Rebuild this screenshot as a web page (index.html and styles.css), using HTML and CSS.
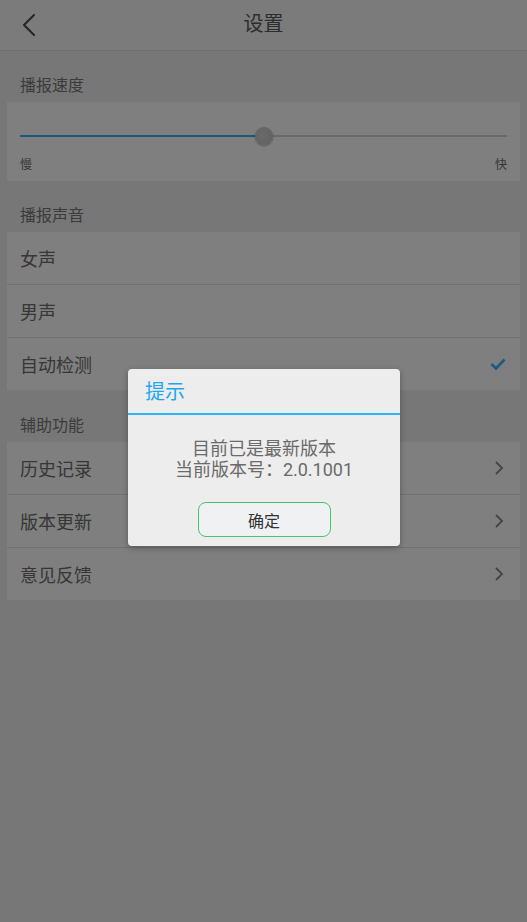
FILE: index.html
```html
<!DOCTYPE html>
<html lang="zh-CN">
<head>
<meta charset="utf-8">
<title>设置</title>
<link rel="stylesheet" href="styles.css">
</head>
<body>
<div class="app">
  <header class="topbar">
    <span class="back">
      <svg width="14" height="22" viewBox="0 0 14 22"><path d="M12 1 L2 11 L12 21" fill="none" stroke="#4a4a4a" stroke-width="2" stroke-linecap="round" stroke-linejoin="round"/></svg>
    </span>
    <h1 class="title">设置</h1>
  </header>

  <div class="section-label">播报速度</div>
  <div class="card slider-card">
    <div class="slider">
      <div class="track"><div class="fill" style="width:50%"></div></div>
      <div class="thumb" style="left:50%"></div>
    </div>
    <div class="slider-labels"><span>慢</span><span>快</span></div>
  </div>

  <div class="section-label">播报声音</div>
  <div class="card">
    <div class="row"><span>女声</span></div>
    <div class="row"><span>男声</span></div>
    <div class="row"><span>自动检测</span>
      <svg class="check" width="16" height="12" viewBox="0 0 16 12"><path d="M1.5 6 L6 10.5 L14.5 1.5" fill="none" stroke="#35b5ff" stroke-width="2.6" stroke-linejoin="miter"/></svg>
    </div>
  </div>

  <div class="section-label section-label-wide">辅助功能</div>
  <div class="card">
    <div class="row"><span>历史记录</span><svg class="chev" width="10" height="16" viewBox="0 0 10 16"><path d="M2 2 L8 8 L2 14" fill="none" stroke="#888" stroke-width="1.8"/></svg></div>
    <div class="row"><span>版本更新</span><svg class="chev" width="10" height="16" viewBox="0 0 10 16"><path d="M2 2 L8 8 L2 14" fill="none" stroke="#888" stroke-width="1.8"/></svg></div>
    <div class="row"><span>意见反馈</span><svg class="chev" width="10" height="16" viewBox="0 0 10 16"><path d="M2 2 L8 8 L2 14" fill="none" stroke="#888" stroke-width="1.8"/></svg></div>
  </div>
</div>

<div class="overlay">
  <div class="dialog">
    <div class="dialog-title">提示</div>
    <div class="dialog-msg">目前已是最新版本<br>当前版本号：2.0.1001</div>
    <div class="dialog-actions"><button class="btn">确定</button></div>
  </div>
</div>
</body>
</html>
```

FILE: styles.css
```css
* { box-sizing: border-box; }
html, body { margin: 0; padding: 0; }
body {
  width: 527px;
  height: 922px;
  background: #eeeeee;
  font-family: Roboto, "Noto Sans CJK SC", sans-serif;
  overflow: hidden;
  position: relative;
}
.app { height: 922px; }
.topbar {
  height: 51px;
  background: #f6f6f6;
  border-bottom: 1px solid #e0e0e0;
  display: flex;
  align-items: center;
  justify-content: center;
  position: relative;
}
.back {
  position: absolute;
  left: 22px;
  top: 14px;
  display: flex;
}
.title {
  margin: 0;
  font-size: 20px;
  font-weight: normal;
  color: #5a5a5a;
  line-height: 24px;
  padding-bottom: 2px;
}
.section-label {
  padding: 25px 20px 6px;
  font-size: 16px;
  line-height: 20px;
  color: #777;
}
.section-label-wide {
  padding-top: 26px;
}
.card {
  margin: 0 7px;
  background: #fefefe;
}
.slider-card {
  height: 79px;
  padding: 0 13px;
  display: flex;
  flex-direction: column;
}
.slider {
  position: relative;
  margin-top: 33px;
  height: 2px;
}
.track {
  height: 2px;
  background: #d2d2d2;
}
.fill {
  height: 2px;
  background: #33b2f8;
}
.thumb {
  position: absolute;
  top: -8px;
  width: 18px;
  height: 18px;
  margin-left: -9px;
  border-radius: 50%;
  background: radial-gradient(circle at 45% 40%, #d2d2d2, #c2c2c2);
  box-shadow: 0 1px 2px rgba(0,0,0,0.35);
}
.slider-labels {
  margin-top: 20px;
  display: flex;
  justify-content: space-between;
  font-size: 12px;
  line-height: 16px;
  color: #6c6c6c;
}
.row {
  height: 53px;
  border-top: 1px solid #e4e4e4;
  display: flex;
  align-items: center;
  justify-content: space-between;
  padding: 0 14px 0 13px;
  font-size: 18px;
  color: #6e6e6e;
}
.row:first-child {
  height: 52px;
  border-top: none;
}
.chev { margin-right: 2px; }

.overlay {
  position: absolute;
  inset: 0;
  background: rgba(0,0,0,0.5);
  display: flex;
  align-items: center;
  justify-content: center;
  padding-bottom: 7px;
  padding-left: 1px;
}
.dialog {
  width: 272px;
  background: #ededed;
  border-radius: 4px;
  box-shadow: 0 2px 6px rgba(0,0,0,0.3);
  overflow: hidden;
}
.dialog-title {
  height: 46px;
  padding: 9px 17px 0;
  font-size: 20px;
  line-height: 28px;
  color: #1fa6f0;
  border-bottom: 2px solid #2ab4f5;
}
.dialog-msg {
  padding-top: 23px;
  text-align: center;
  font-size: 18px;
  line-height: 21px;
  color: #6a6a6a;
}
.dialog-actions {
  display: flex;
  justify-content: center;
  padding: 22px 0 9px;
}
.btn {
  width: 133px;
  height: 35px;
  border: 1.5px solid #45c46c;
  border-radius: 8px;
  background: #f0f1f3;
  font-family: Roboto, "Noto Sans CJK SC", sans-serif;
  font-size: 16px;
  color: #333;
  padding: 0;
}
```
